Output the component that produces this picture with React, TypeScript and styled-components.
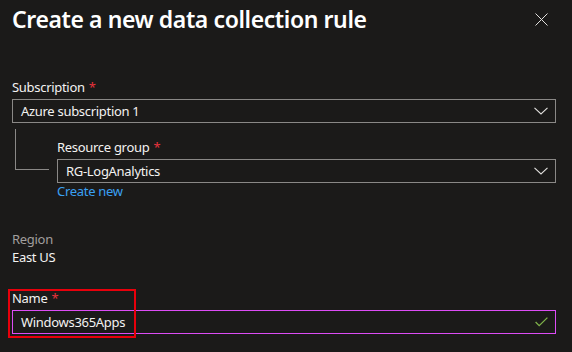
import React from "react";
import styled, { createGlobalStyle } from "styled-components";

const Global = createGlobalStyle`
  html, body { margin: 0; padding: 0; background: #1b1a19; }
  body { font-family: "Segoe UI", "Noto Sans", "Open Sans", sans-serif; color: #f3f2f1; }
  * { box-sizing: border-box; }
`;

const Panel = styled.div`
  width: 572px;
  height: 352px;
  background: #1b1a19;
  padding: 0 16px 0 12px;
  display: flex;
  flex-direction: column;
  overflow: hidden;
`;

const Header = styled.div`
  display: flex;
  align-items: flex-start;
  justify-content: space-between;
  height: 78px;
  padding-top: 3px;
`;

const Title = styled.h1`
  margin: 0;
  font-size: 23px;
  font-weight: 600;
  line-height: 32px;
  color: #ffffff;
  letter-spacing: -0.4px;
`;

const CloseButton = styled.button`
  background: none;
  border: none;
  padding: 0;
  margin: 10px 8px 0 0;
  width: 13px;
  height: 13px;
  display: flex;
  align-items: center;
  justify-content: center;
`;

const Field = styled.div`
  display: flex;
  flex-direction: column;
  position: relative;
`;

const Label = styled.label`
  font-size: 13px;
  line-height: 18px;
  letter-spacing: -0.3px;
  color: #f3f2f1;
  margin-bottom: 3px;
`;

const Required = styled.span`
  color: #e8323c;
  margin-left: 4px;
`;

const InputBox = styled.div<{ $accent?: boolean }>`
  height: 24px;
  border: 1px solid ${(p) => (p.$accent ? "#dc4cf5" : "#8a8886")};
  display: flex;
  align-items: center;
  justify-content: space-between;
  padding: 0 7px 0 8px;
  font-size: 13px;
  letter-spacing: -0.3px;
  color: #f3f2f1;
`;

const Nested = styled.div`
  display: flex;
`;

const Connector = styled.div`
  width: 34px;
  height: 41px;
  margin: 6px 8px 0 3px;
  border-left: 1px solid #8a8886;
  border-bottom: 1px solid #8a8886;
  flex-shrink: 0;
`;

const NestedContent = styled.div`
  flex: 1;
  display: flex;
  flex-direction: column;
  padding-top: 15px;
`;

const Link = styled.a`
  color: #3aa0f3;
  font-size: 13px;
  line-height: 16px;
  letter-spacing: -0.3px;
  text-decoration: none;
`;

const Static = styled.div`
  display: flex;
  flex-direction: column;
  margin-top: 31px;
`;

const Value = styled.div<{ $muted?: boolean }>`
  font-size: 13px;
  line-height: 18px;
  letter-spacing: -0.3px;
  color: ${(p) => (p.$muted ? "#a19f9d" : "#f3f2f1")};
`;

const NameField = styled(Field)`
  margin-top: 23px;
`;

const Highlight = styled.div`
  position: absolute;
  left: -4px;
  top: 0;
  width: 128px;
  height: 49px;
  border: 2px solid #e8000b;
  pointer-events: none;
`;

const Chevron = () => (
  <svg width="14" height="8" viewBox="0 0 14 8" fill="none">
    <polyline points="0.5,0.8 7,7 13.5,0.8" stroke="#e1dfdd" strokeWidth="1.1" />
  </svg>
);

const Check = () => (
  <svg width="13" height="10" viewBox="0 0 13 10" fill="none">
    <polyline points="0.6,5 4.2,8.6 12.4,0.6" stroke="#7fb24a" strokeWidth="1.3" />
  </svg>
);

const CloseIcon = () => (
  <svg width="13" height="13" viewBox="0 0 13 13" fill="none">
    <path d="M0.5 0.5 L12.5 12.5 M12.5 0.5 L0.5 12.5" stroke="#e1dfdd" strokeWidth="1" />
  </svg>
);

export default function App() {
  return (
    <>
      <Global />
      <Panel>
        <Header>
          <Title>Create a new data collection rule</Title>
          <CloseButton aria-label="Close">
            <CloseIcon />
          </CloseButton>
        </Header>

        <Field>
          <Label>
            Subscription<Required>*</Required>
          </Label>
          <InputBox>
            <span>Azure subscription 1</span>
            <Chevron />
          </InputBox>
        </Field>

        <Nested>
          <Connector />
          <NestedContent>
            <Field>
              <Label>
                Resource group<Required>*</Required>
              </Label>
              <InputBox>
                <span>RG-LogAnalytics</span>
                <Chevron />
              </InputBox>
            </Field>
            <Link href="#">Create new</Link>
          </NestedContent>
        </Nested>

        <Static>
          <Value $muted>Region</Value>
          <Value>East US</Value>
        </Static>

        <NameField>
          <Label>
            Name<Required>*</Required>
          </Label>
          <InputBox $accent>
            <span>Windows365Apps</span>
            <Check />
          </InputBox>
          <Highlight />
        </NameField>
      </Panel>
    </>
  );
}
